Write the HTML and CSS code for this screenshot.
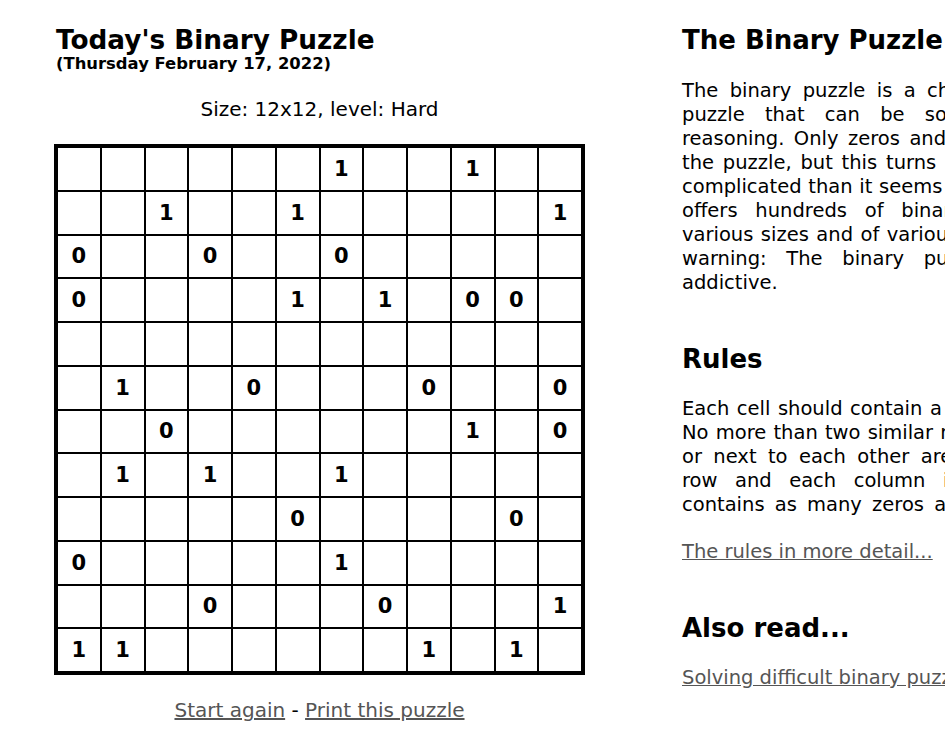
FILE: index.html
```html
<!DOCTYPE html>
<html>
<head>
<meta charset="utf-8">
<link rel="stylesheet" href="styles.css">
</head>
<body>
<div class="page">
  <div class="left">
    <h1 class="title">Today's Binary Puzzle</h1>
    <div class="date">(Thursday February 17, 2022)</div>
    <div class="size">Size: 12x12, level: Hard</div>
    <div class="board" id="board"></div>
    <div class="actions"><a href="#">Start again</a> - <a href="#">Print this puzzle</a></div>
  </div>
  <div class="right">
    <h2 class="head">The Binary Puzzle</h2>
    <p class="text intro">
      <span class="ln l1">The binary puzzle is a challenging logic</span>
      <span class="ln l2">puzzle that can be solved with logical</span>
      <span class="ln l3">reasoning. Only zeros and ones are placed in</span>
      <span class="ln l4">the puzzle, but this turns out to be more</span>
      <span class="ln l5">complicated than it seems at first sight. This</span>
      <span class="ln l6">offers hundreds of binary puzzles in</span>
      <span class="ln l7">various sizes and of various levels. A</span>
      <span class="ln l8">warning: The binary puzzle may be</span>
      <span class="ln">addictive.</span>
    </p>
    <h2 class="head sub">Rules</h2>
    <p class="text rules">
      <span class="ln r1">Each cell should contain a zero or a one.</span>
      <span class="ln r2">No more than two similar numbers below</span>
      <span class="ln r3">or next to each other are allowed. Each</span>
      <span class="ln r4">row and each column is unique and</span>
      <span class="ln r5">contains as many zeros as ones.</span>
    </p>
    <p class="more"><a href="#">The rules in more detail...</a></p>
    <h2 class="head sub2">Also read...</h2>
    <p class="more last"><a href="#">Solving difficult binary puzzles</a></p>
  </div>
</div>
<script src="board.js"></script>
</body>
</html>
```
FILE: styles.css
```css
html, body { margin: 0; padding: 0; background: #fff; }
body {
  font-family: "DejaVu Sans", Verdana, sans-serif;
  color: #000;
  overflow: hidden;
}
.page {
  display: flex;
  align-items: flex-start;
  padding: 25px 0 0 54px;
  width: 1300px;
}
.left { width: 531px; flex: none; }
.title {
  margin: 0;
  font-size: 26.3px;
  line-height: 30px;
  font-weight: bold;
  padding-left: 2px;
}
.date {
  font-size: 16.4px;
  font-weight: bold;
  line-height: 18px;
  padding-left: 2px;
}
.size {
  text-align: center;
  font-size: 20px;
  line-height: 24px;
  margin: 24px 0 23px 0;
}
.board {
  box-sizing: border-box;
  width: 531px;
  height: 531px;
  border: 4px solid #000;
  background: #000;
  display: grid;
  grid-template-columns: repeat(12, 1fr);
  grid-template-rows: repeat(12, 1fr);
  gap: 2px;
}
.cell {
  background: #fff;
  display: flex;
  align-items: center;
  justify-content: center;
  font-weight: bold;
  font-size: 21px;
}
.actions {
  text-align: center;
  font-size: 20px;
  line-height: 24px;
  margin-top: 23px;
}
a { color: #555; text-decoration: underline; }
.right {
  margin-left: 97px;
  width: 420px;
  flex: none;
}
.head {
  margin: 0;
  font-size: 26px;
  line-height: 30px;
  font-weight: bold;
}
.text {
  font-size: 19.5px;
  line-height: 24px;
  margin: 0;
}
.intro { margin-top: 24px; }
.sub { margin-top: 49px; }
.rules { margin-top: 23px; }
.sub2 { margin-top: 49px; }
.ln { display: block; white-space: nowrap; }
.l1 { word-spacing: 5.2px; }
.l2 { word-spacing: 14.1px; }
.l3 { word-spacing: 3.3px; }
.l4 { word-spacing: 2.6px; }
.l5 { word-spacing: 0.5px; }
.l6 { word-spacing: 11.6px; }
.l7 { word-spacing: 1.3px; }
.l8 { word-spacing: 13.5px; }
.r1 { word-spacing: 1.3px; }
.r2 { word-spacing: 1px; }
.r3 { word-spacing: 5.2px; }
.r4 { word-spacing: 11.3px; }
.r5 { word-spacing: 4px; }
.more {
  font-size: 19.5px;
  line-height: 24px;
  margin: 23px 0 0 0;
  white-space: nowrap;
}
.more.last { margin-top: 23px; }
```
FILE: board.js
```js
var rows = [
  "......1..1..",
  "..1..1.....1",
  "0..0..0.....",
  "0....1.1.00.",
  "............",
  ".1..0...0..0",
  "..0......1.0",
  ".1.1..1.....",
  ".....0....0.",
  "0.....1.....",
  "...0...0...1",
  "11......1.1."
];
var board = document.getElementById("board");
rows.forEach(function (r) {
  for (var i = 0; i < 12; i++) {
    var c = document.createElement("div");
    c.className = "cell";
    var ch = r.charAt(i);
    if (ch !== ".") c.textContent = ch;
    board.appendChild(c);
  }
});
```
